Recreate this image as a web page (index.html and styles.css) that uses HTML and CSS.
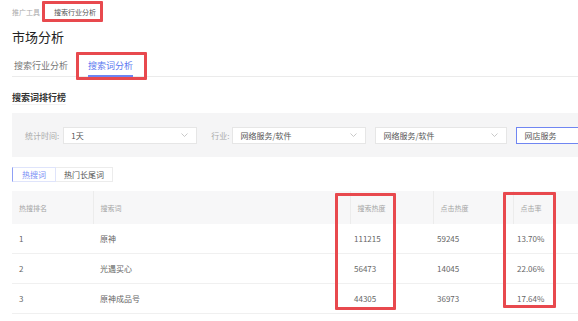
FILE: index.html
```html
<!DOCTYPE html>
<html lang="zh-CN">
<head>
    <meta charset="UTF-8">
    <title>市场分析</title>
    <link rel="stylesheet" href="styles.css">
</head>
<body>
    <div class="page">
        <div class="crumbs">
            <span class="crumb">推广工具</span>
            <span class="crumb crumb-current">搜索行业分析</span>
        </div>
        <h1 class="title">市场分析</h1>
        <div class="tabs">
            <span class="tab">搜索行业分析</span>
            <span class="tab tab-active">搜索词分析</span>
        </div>
        <h2 class="section-title">搜索词排行榜</h2>
        <div class="filters">
            <span class="filter-label">统计时间:</span>
            <div class="select select-time">
                <span>1天</span>
                <svg class="chevron" width="7" height="4" viewBox="0 0 7 4"><polyline points="0.5,0.5 3.5,3.5 6.5,0.5" fill="none" stroke="#bbb" stroke-width="0.8"/></svg>
            </div>
            <span class="filter-label label-industry">行业:</span>
            <div class="select select-industry">
                <span>网络服务/软件</span>
                <svg class="chevron" width="7" height="4" viewBox="0 0 7 4"><polyline points="0.5,0.5 3.5,3.5 6.5,0.5" fill="none" stroke="#bbb" stroke-width="0.8"/></svg>
            </div>
            <div class="select select-sub">
                <span>网络服务/软件</span>
                <svg class="chevron" width="7" height="4" viewBox="0 0 7 4"><polyline points="0.5,0.5 3.5,3.5 6.5,0.5" fill="none" stroke="#bbb" stroke-width="0.8"/></svg>
            </div>
            <div class="search-input">网店服务</div>
        </div>
        <div class="word-tabs">
            <span class="word-tab word-tab-active">热搜词</span>
            <span class="word-tab">热门长尾词</span>
        </div>
        <table class="rank-table">
            <colgroup>
                <col class="col-rank">
                <col class="col-word">
                <col class="col-num">
                <col class="col-num2">
                <col class="col-rate">
            </colgroup>
            <thead>
                <tr>
                    <th>热搜排名</th>
                    <th>搜索词</th>
                    <th>搜索热度</th>
                    <th>点击热度</th>
                    <th>点击率</th>
                </tr>
            </thead>
            <tbody>
                <tr>
                    <td>1</td>
                    <td>原神</td>
                    <td>111215</td>
                    <td>59245</td>
                    <td>13.70%</td>
                </tr>
                <tr>
                    <td>2</td>
                    <td>光遇买心</td>
                    <td>56473</td>
                    <td>14045</td>
                    <td>22.06%</td>
                </tr>
                <tr>
                    <td>3</td>
                    <td>原神成品号</td>
                    <td>44305</td>
                    <td>36973</td>
                    <td>17.64%</td>
                </tr>
            </tbody>
        </table>

        <!-- red annotation frames drawn over the screenshot -->
        <div class="mark mark-crumb"></div>
        <div class="mark mark-tab"></div>
        <div class="mark mark-search"></div>
        <div class="mark mark-rate"></div>
    </div>
</body>
</html>
```

FILE: styles.css
```css
body {
    margin: 0;
    background: #fff;
    font-family: "Noto Sans CJK SC", "Noto Sans", sans-serif;
    color: #333;
    overflow: hidden;
}
.page {
    position: relative;
    width: 566px;
    padding-left: 12px;
    overflow: hidden;
}
.crumbs {
    display: flex;
    gap: 8px;
    padding-top: 7px;
    font-size: 7px;
    line-height: 10px;
}
.crumb {
    color: #aaa;
}
.crumb-current {
    color: #555;
    padding: 0 6px;
}
.title {
    margin: 12px 0 0;
    font-size: 13px;
    line-height: 16px;
    font-weight: normal;
    color: #222;
}
.tabs {
    display: flex;
    gap: 20px;
    margin-top: 15px;
    border-bottom: 1px solid #ebebeb;
    font-size: 9px;
    line-height: 12px;
}
.tab {
    padding-bottom: 3px;
    margin-bottom: -1px;
    border-bottom: 2px solid transparent;
    color: #777;
}
.tab:first-child {
    margin-left: 2px;
}
.tab-active {
    color: #5b78f0;
    border-bottom-color: #6d85f3;
}
.section-title {
    display: inline-block;
    margin: 15px 0 0;
    font-size: 9px;
    line-height: 12px;
    font-weight: bold;
    color: #333;
    border-bottom: 1px solid #f2f2f2;
}
.filters {
    display: flex;
    align-items: center;
    height: 44px;
    margin-top: 7px;
    padding-left: 13px;
    background: #f5f5f6;
    font-size: 8px;
}
.filter-label {
    flex-shrink: 0;
    color: #aaa;
    margin-right: 4px;
}
.label-industry {
    margin-left: 14px;
    margin-right: 3px;
}
.select, .search-input {
    display: flex;
    flex-shrink: 0;
    align-items: center;
    justify-content: space-between;
    box-sizing: border-box;
    height: 17px;
    padding: 0 8px 0 7px;
    background: #fff;
    border: 1px solid #e6e6e6;
    color: #555;
}
.select-time {
    width: 134px;
}
.select-industry {
    width: 134px;
}
.select-sub {
    width: 132px;
    margin-left: 9px;
}
.search-input {
    width: 120px;
    margin-left: 9px;
    border-color: #7086f2;
}
.word-tabs {
    display: flex;
    margin-top: 10px;
    font-size: 8px;
    line-height: 13px;
}
.word-tab {
    padding: 0 8px;
    border: 1px solid #ececec;
    color: #555;
}
.word-tab-active {
    padding: 0 9px;
    color: #7b8ff5;
    border-color: #dfe4fb;
    border-left: 1px solid #8fa0f5;
}
.word-tab + .word-tab {
    border-left: none;
}
.rank-table {
    width: 680px;
    margin-top: 9px;
    table-layout: fixed;
    border-collapse: collapse;
    font-size: 8px;
}
.col-rank { width: 81px; }
.col-word { width: 257px; }
.col-num { width: 83px; }
.col-num2 { width: 80px; }
.rank-table th {
    height: 33px;
    padding: 0 7px;
    background: #f7f7f8;
    border-right: 1px solid #ececec;
    text-align: left;
    font-weight: normal;
    font-size: 7px;
    color: #a5a5a5;
}
.rank-table td {
    height: 29px;
    padding: 0 5px 0 7px;
    border-bottom: 1px solid #f0f0f0;
    color: #666;
}
.rank-table td:nth-child(n+3) {
    padding-left: 4px;
}
.mark {
    position: absolute;
    box-sizing: border-box;
    border: 3px solid #e8494e;
    border-radius: 1px;
}
.mark-crumb {
    left: 42px;
    top: 1px;
    width: 61px;
    height: 21px;
}
.mark-tab {
    left: 76px;
    top: 52px;
    width: 71px;
    height: 28px;
}
.mark-search {
    left: 335px;
    top: 193px;
    width: 61px;
    height: 117px;
}
.mark-rate {
    left: 503px;
    top: 192px;
    width: 53px;
    height: 116px;
}
```
